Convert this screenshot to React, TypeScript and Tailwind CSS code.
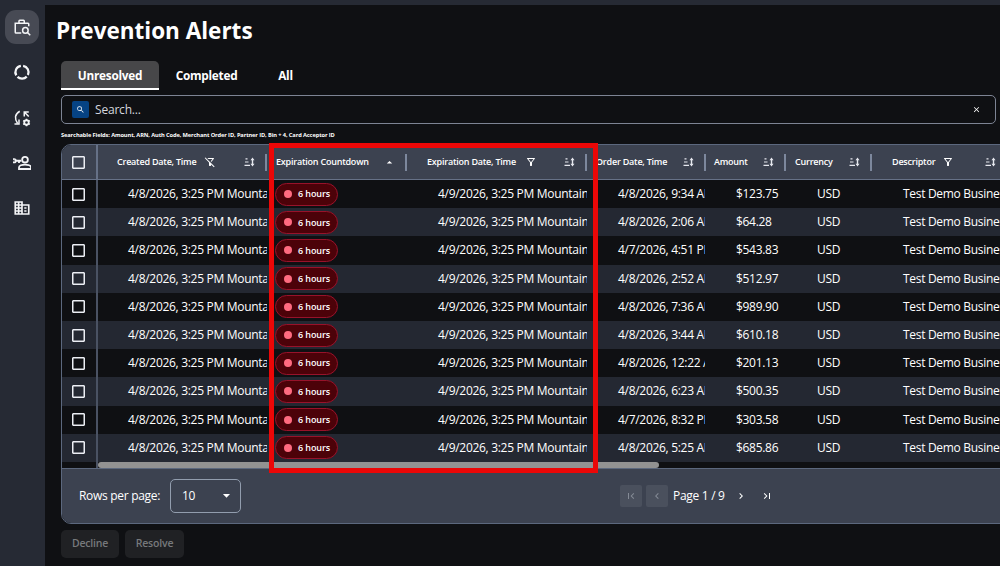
import type { ReactNode } from "react";
import { MdOutlineFilterAlt, MdOutlineFilterAltOff, MdSearch, MdClose, MdArrowDropUp, MdArrowDropDown, MdChevronLeft, MdChevronRight, MdFirstPage, MdLastPage } from "react-icons/md";

const rows = [
  ["4/8/2026, 9:34 AM", "$123.75"],
  ["4/8/2026, 2:06 AM", "$64.28"],
  ["4/7/2026, 4:51 PM", "$543.83"],
  ["4/8/2026, 2:52 AM", "$512.97"],
  ["4/8/2026, 7:36 AM", "$989.90"],
  ["4/8/2026, 3:44 AM", "$610.18"],
  ["4/8/2026, 12:22 AM", "$201.13"],
  ["4/8/2026, 6:23 AM", "$500.35"],
  ["4/7/2026, 8:32 PM", "$303.58"],
  ["4/8/2026, 5:25 AM", "$685.86"],
];

const columns = "grid grid-cols-[36px_169px_140px_180px_119px_80px_86px_136px]";

function SortIcon() {
  return (
    <svg className="h-[10px] w-[11px] shrink-0" viewBox="0 0 11 10" fill="none" stroke="#e6e8ee" strokeWidth="1.2">
      <path d="M1.500 1.900H3.500M1 5H4.500M.5 8.300H6" />
      <path d="M8.500 2V8" strokeWidth="1.4" />
      <path d="M6.500 3.200 8.500 .6 10.500 3.200zM6.500 6.800 8.500 9.400 10.500 6.800z" fill="#e6e8ee" stroke="none" />
    </svg>
  );
}

function Head({ className, label, icon, sort = true }: { className: string; label: string; icon?: ReactNode; sort?: boolean }) {
  return (
    <div className="flex items-center overflow-hidden">
      <div className={"flex flex-1 items-center whitespace-nowrap " + className}>
        <span>{label}</span>
        {icon}
      </div>
      {sort ? <SortIcon /> : <MdArrowDropUp className="mr-[-1px] size-[13px]" />}
      <div className="ml-[10px] h-[17px] w-[2px] bg-[#7d889d]" />
    </div>
  );
}

function Box() {
  return <div className="size-[13px] rounded-[1px] border-[1.5px] border-[#eceef4] shadow-[inset_0_0_0_0.5px_#eceef4]" />;
}

function Side({ active, children }: { active?: boolean; children: ReactNode }) {
  return (
    <div className={"flex size-[34px] items-center justify-center rounded-[11px] " + (active ? "bg-[#474a54]" : "")}>
      <svg viewBox="0 0 24 24" className="size-[18px]" fill="none" stroke="#f4f5f7" strokeWidth="2">{children}</svg>
    </div>
  );
}

export default function App() {
  return (
    <div className="flex h-[566px] w-[1000px] flex-col overflow-hidden bg-[#0f1013] font-['Open_Sans','Noto_Sans',sans-serif] text-white">
      <div className="h-[5px] shrink-0 bg-[#262a34]" />
      <div className="flex min-h-0 flex-1">
        <aside className="flex w-[45px] shrink-0 flex-col items-center gap-[11.3px] bg-[#262a34] pt-[5px] pr-[1px]">
          <Side active>
            <path d="M11 20H4Q3 20 3 19V7h17q1 0 1 1v3M8 7V4q0-1 1-1h5q1 0 1 1v3" />
            <circle cx="16.500" cy="16.500" r="3.700" /><path d="m19 19 4 4" />
          </Side>
          <Side>
            <path d="M13.500 3.700A8.700 8.700 0 0 1 19.900 16M18.300 18.200A8.700 8.700 0 0 1 6 18.500M4.300 16.500A8.700 8.700 0 0 1 10.500 3.700" strokeWidth="3" />
          </Side>
          <Side>
            <path d="M9 3C2 7 2 13 6 19M2 20h6v-6M15 10V4h6M15 4l6 6" />
            <circle cx="18" cy="18" r="3" strokeWidth="2.400" /><path d="M18 13v2m0 6v2m-4.500-7.500 2 1m5 3 2 1m0-5-2 1m-5 3-2 1" />
          </Side>
          <Side>
            <circle cx="16" cy="7.500" r="3.800" strokeWidth="2.4" /><path d="M8 20v-2c0-5 16-5 16 0v2zM2 9h9M8 9v3" strokeWidth="2.4" /><circle cx="1.500" cy="9" r="2.400" />
          </Side>
          <Side>
            <path d="M3 4h9v16H3zM12 8h9v12h-9M3 8h9M3 12h9M3 16h9M7.500 4v16M15 12h3M15 16h3" strokeWidth="2.2" />
          </Side>
        </aside>
        <main className="flex min-w-0 flex-1 flex-col overflow-hidden">
          <h1 className="mt-[10px] ml-[11px] text-[22.5px] leading-[32px] font-bold">Prevention Alerts</h1>
          <div className="mt-[14px] ml-4 flex h-[29px] text-[11.8px] leading-[29px] font-bold tracking-[-0.25px]">
            <div className="w-[98px] rounded-t-[5px] border-b-2 border-white bg-[#474749] text-center">Unresolved</div>
            <div className="w-[95px] text-center">Completed</div>
            <div className="w-[63px] text-center">All</div>
          </div>
          <div className="mt-[5px] ml-4 flex h-[29px] w-[935px] shrink-0 items-center rounded-[5px] border border-[#7d8494] pr-[14px] pl-[10px]">
            <div className="flex size-[17px] items-center justify-center rounded-[2px] bg-[#064384]"><MdSearch className="size-[9px]" /></div>
            <span className="ml-[6px] flex-1 text-[12px] tracking-[-0.2px] text-[#d5d7de]">Search...</span>
            <MdClose className="size-[9px]" />
          </div>
          <div className="ml-4 h-[20px] shrink-0 pt-[7px] text-[5.7px] leading-[9px] font-bold tracking-[-0.11px]">Searchable Fields: Amount, ARN, Auth Code, Merchant Order ID, Partner ID, Bin + 4, Card Acceptor ID</div>
          <section className="relative ml-4 h-[380px] w-[960px] shrink-0 rounded-l-[10px] border border-[#5c687e] bg-[#0f1013]">
            <div className={columns + " h-[35px] rounded-tl-[9px] border-b border-[#667187] bg-[#3c4250] text-[9px] font-semibold tracking-[-0.22px]"}>
              <div className="flex items-center border-r-2 border-[#667187] pl-[10px]"><Box /></div>
              <Head className="pl-[19px]" label="Created Date, Time" icon={<MdOutlineFilterAltOff className="ml-[8px] size-[12px]" />} />
              <Head className="pl-[9px]" label="Expiration Countdown" sort={false} />
              <Head className="pl-[20px]" label="Expiration Date, Time" icon={<MdOutlineFilterAlt className="ml-[9px] size-[12px]" />} />
              <Head className="pl-[9px]" label="Order Date, Time" />
              <Head className="pl-[8px]" label="Amount" />
              <Head className="pl-[9px]" label="Currency" />
              <Head className="pl-[20px]" label="Descriptor" icon={<MdOutlineFilterAlt className="ml-[7px] size-[12px]" />} />
            </div>
            {rows.map(([date, amount], i) => (
              <div key={i} className={columns + " h-[28.2px] items-center text-[12px] tracking-[-0.3px] whitespace-nowrap " + (i % 2 ? "bg-[#242832]" : "bg-[#0f1013]")}>
                <div className="flex h-full items-center border-r-2 border-[#4a5263] pl-[10px]"><Box /></div>
                <div className="overflow-hidden pl-[30px]">4/8/2026, 3:25 PM Mountain</div>
                <div className="pl-[8px]">
                  <div className="flex h-[23px] w-[63px] items-center gap-[6px] rounded-full border border-[#98122a] bg-[#4c0209] pl-[8px] text-[9px] font-semibold tracking-[-0.1px]">
                    <i className="size-[8px] rounded-full bg-[#ff6b80]" />6 hours
                  </div>
                </div>
                <div className="overflow-hidden pl-[31px]">4/9/2026, 3:25 PM Mountain</div>
                <div className="mr-[1px] overflow-hidden pl-[31px]">{date}</div>
                <div className="pl-[30px]">{amount}</div>
                <div className="pl-[31px]">USD</div>
                <div className="pl-[31px]">Test Demo Business</div>
              </div>
            ))}
            <div className="flex h-[6px]"><div className="w-[36px] border-r-2 border-[#4a5263]" /><div className="w-[561px] rounded-full bg-[#929292]" /></div>
            <div className="flex h-[55px] items-center rounded-bl-[9px] border-t border-[#5c687e] bg-[#3c4250] text-[12px] tracking-[-0.3px]">
              <span className="ml-[17px] w-[91px]">Rows per page:</span>
              <div className="flex h-[34px] w-[71px] items-center justify-between rounded-[5px] border border-[#929dae] pr-[5px] pl-[11px]">10<MdArrowDropDown className="size-[17px]" /></div>
              <div className="ml-[379px] flex items-center">
                <div className="flex size-[22px] items-center justify-center rounded-[2px] bg-[#4a505d] text-[#858b96]"><MdFirstPage className="size-[12px]" /></div>
                <div className="ml-[4px] flex size-[22px] items-center justify-center rounded-[2px] bg-[#4a505d] text-[#858b96]"><MdChevronLeft className="size-[12px]" /></div>
                <span className="ml-[5px] w-[62px]">Page 1 / 9</span>
                <MdChevronRight className="size-[12px]" />
                <MdLastPage className="ml-[14px] size-[12px]" />
              </div>
            </div>
            <div className="absolute top-[-2px] left-[207px] h-[330px] w-[329px] border-[5px] border-[#eb0707]" />
          </section>
          <div className="mt-[6px] ml-4 flex gap-[6px] text-[10.5px] font-semibold tracking-[-0.2px] text-[#77797c]">
            <div className="flex h-[28px] w-[58px] items-center justify-center rounded-[5px] bg-[#202124]">Decline</div>
            <div className="flex h-[28px] w-[59px] items-center justify-center rounded-[5px] bg-[#202124]">Resolve</div>
          </div>
        </main>
      </div>
    </div>
  );
}
